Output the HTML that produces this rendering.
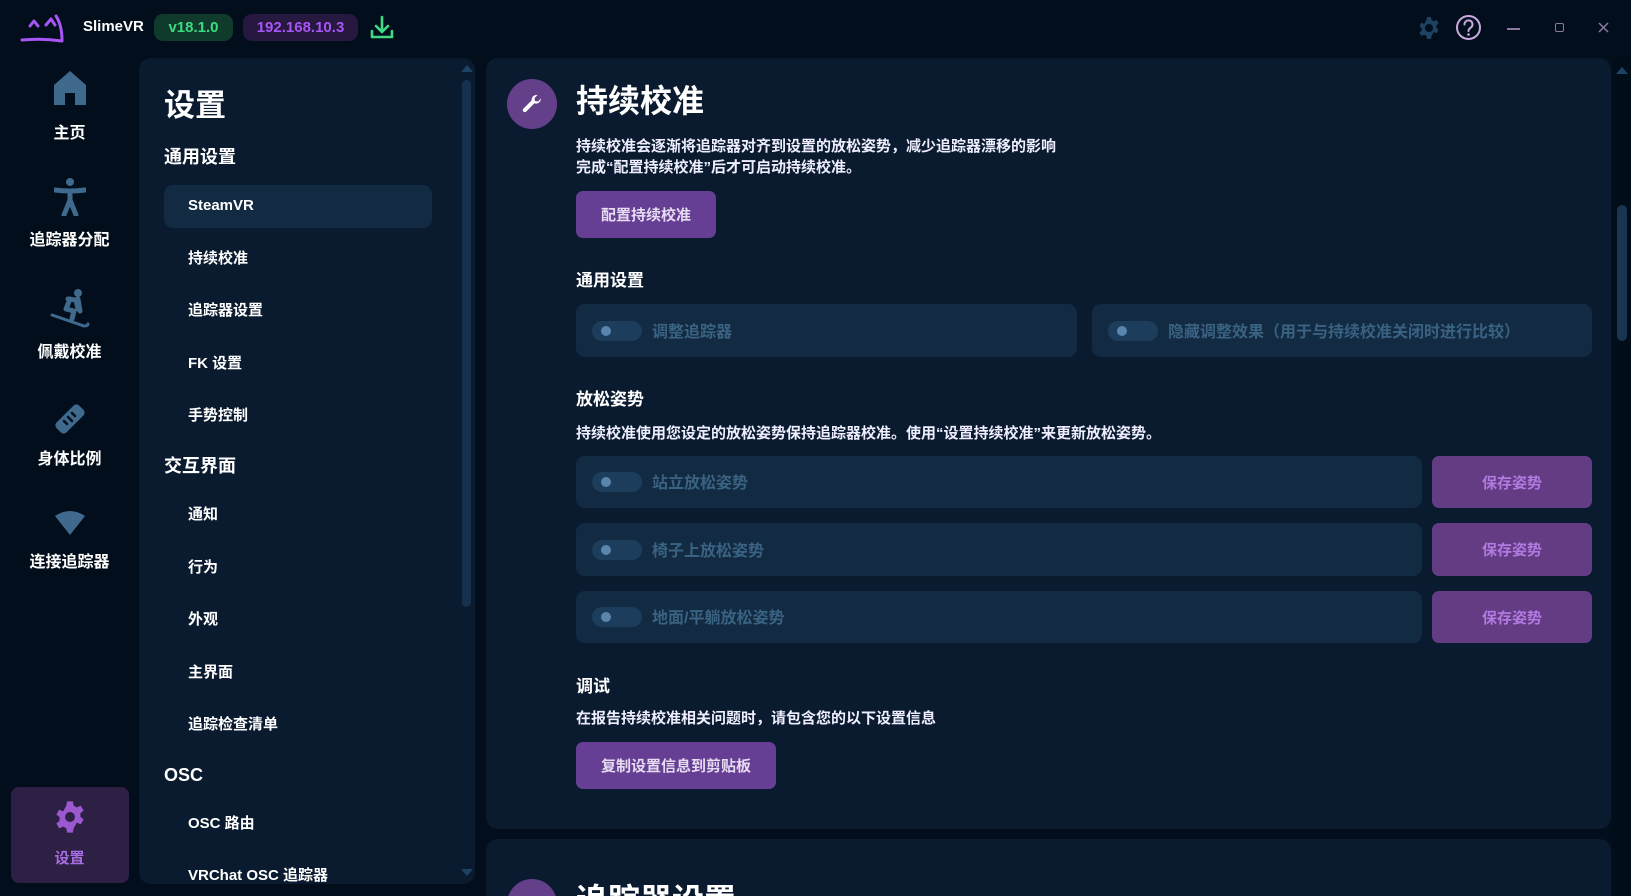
<!DOCTYPE html>
<html><head><meta charset="utf-8"><style>
*{margin:0;padding:0;box-sizing:border-box}
html{width:1631px;height:896px;overflow:hidden}
body{width:1631px;height:896px;background:#020e1b;overflow:hidden;position:relative;font-family:"Liberation Sans","Noto Sans CJK SC",sans-serif;color:#fff;font-weight:bold}
.a{position:absolute}
.t{position:absolute;white-space:nowrap;line-height:1}
.panel{background:#0a1b2f;border-radius:12px}
.nav{position:absolute;left:0;width:139px;text-align:center;font-size:16px}
.item{font-size:15px;left:188px}
.sec{font-size:18px;left:164px}
.card{position:absolute;background:#122b43;border-radius:9px;display:flex;align-items:center;padding-left:16px}
.tog{position:relative;width:50px;height:20px;border-radius:10px;background:#1c3d5c;flex:none;margin-right:10px}
.tog:after{content:"";position:absolute;left:9px;top:5px;width:10px;height:10px;border-radius:50%;background:#5a86ad}
.lbl{font-size:16px;color:#3a6282;white-space:nowrap;line-height:20px;position:relative;top:2px}
.btn{position:absolute;background:#663f94;border-radius:7px;color:#e6dcf2;font-size:15px;display:flex;align-items:center;justify-content:center}
.save{position:absolute;left:1432px;width:160px;background:#643c83;border-radius:7px;color:#b07ae0;font-size:15px;display:flex;align-items:center;justify-content:center}
</style></head><body>
<svg class="a" style="left:18px;top:13px" width="48" height="30" viewBox="0 0 48 30"><path d="M4 27 Q24 25 44 28 Q44 12 38 3 M12 13 L16 8 L20 13 M28 12 L33 6 L37 12" fill="none" stroke="#a855f7" stroke-width="3" stroke-linecap="round" stroke-linejoin="round"/></svg>
<div class="t" style="left:83px;top:19px;font-size:15px">SlimeVR</div>
<div class="a" style="left:154px;top:14px;width:79px;height:27px;border-radius:9px;background:#0f3a2c;color:#3ddc84;font-size:15px;text-align:center;line-height:27px">v18.1.0</div>
<div class="a" style="left:243px;top:14px;width:115px;height:27px;border-radius:9px;background:#26183f;color:#a855f7;font-size:15px;text-align:center;line-height:27px">192.168.10.3</div>
<svg class="a" style="left:369px;top:15px" width="26" height="26" viewBox="0 0 26 26"><path d="M13 2 V17 M7 11 L13 17 L19 11 M3 16 V22 H23 V16" fill="none" stroke="#3ddc84" stroke-width="2.6" stroke-linecap="round" stroke-linejoin="round"/></svg>
<svg class="a" style="left:1417px;top:16px" width="24" height="24" viewBox="0 0 24 24"><path fill="#1e4262" fill-rule="evenodd" d="M10 1h4l.6 3 2.2 1.2 2.8-1.2 2 3.4-2.3 2c.1.8.1 1.6 0 2.4l2.3 2-2 3.4-2.8-1.2L14.6 20 14 23h-4l-.6-3-2.2-1.2-2.8 1.2-2-3.4 2.3-2a9 9 0 010-2.4l-2.3-2 2-3.4 2.8 1.2L9.4 4zM12 8a4 4 0 100 8 4 4 0 000-8z"/></svg>
<svg class="a" style="left:1455px;top:14px" width="27" height="27" viewBox="0 0 27 27"><circle cx="13.5" cy="13.5" r="11.5" fill="none" stroke="#c9a8e0" stroke-width="2"/><path d="M9.5 10.5a4 4 0 117 2.5c-1.5 1.3-3 2-3 4" fill="none" stroke="#c9a8e0" stroke-width="2" stroke-linecap="round"/><circle cx="13.5" cy="20.5" r="1.3" fill="#c9a8e0"/></svg>
<div class="a" style="left:1507px;top:28px;width:13px;height:2px;background:#8a7aa0"></div>
<div class="a" style="left:1555px;top:23px;width:9px;height:9px;border:1.5px solid #8a7aa0;border-radius:2px"></div>
<svg class="a" style="left:1598px;top:22px" width="11" height="11"><path d="M1 1L10 10M10 1L1 10" stroke="#8a7aa0" stroke-width="1.5"/></svg>

<svg class="a" style="left:54px;top:71px" width="32" height="34" viewBox="0 0 32 34"><path d="M16 0 L32 14 V34 H21 V22 H11 V34 H0 V14Z" fill="#3f6a8e"/></svg>
<div class="nav t" style="top:126px">主页</div>
<svg class="a" style="left:54px;top:178px" width="32" height="38" viewBox="0 0 32 38"><circle cx="16" cy="4" r="4" fill="#3f6a8e"/><path d="M1 12 Q16 14 31 12 M16 13 V24 M16 22 L10 37 M16 22 L22 37" fill="none" stroke="#3f6a8e" stroke-width="5" stroke-linecap="round"/></svg>
<div class="nav t" style="top:233px">追踪器分配</div>
<svg class="a" style="left:50px;top:289px" width="40" height="40" viewBox="0 0 40 40"><circle cx="28" cy="4" r="4" fill="#3f6a8e"/><path d="M18 10 L26 11 L28 20 M20 10 L16 20 L24 22 L22 30 M28 10 L30 22" fill="none" stroke="#3f6a8e" stroke-width="5" stroke-linecap="round" stroke-linejoin="round"/><path d="M2 26 L34 37 Q38 37 38 35" fill="none" stroke="#3f6a8e" stroke-width="3" stroke-linecap="round"/></svg>
<div class="nav t" style="top:345px">佩戴校准</div>
<svg class="a" style="left:50px;top:399px" width="40" height="40" viewBox="0 0 40 40"><rect x="4" y="13" width="32" height="14" rx="4" transform="rotate(-45 20 20)" fill="#3f6a8e"/><path d="M14 22 L17 25 M18 18 L22 22 M22 14 L25 17" stroke="#020e1b" stroke-width="2.5" stroke-linecap="round"/></svg>
<div class="nav t" style="top:452px">身体比例</div>
<svg class="a" style="left:55px;top:510px" width="30" height="26" viewBox="0 0 30 26"><path d="M0 6 Q15 -4 30 6 L15 25Z" fill="#3f6a8e"/></svg>
<div class="nav t" style="top:555px">连接追踪器</div>
<div class="a" style="left:11px;top:787px;width:118px;height:96px;border-radius:8px;background:#2e1f45"></div>
<svg class="a" style="left:53px;top:800px" width="34" height="34" viewBox="0 0 24 24"><path fill="#9b59d0" fill-rule="evenodd" d="M10 1h4l.6 3 2.2 1.2 2.8-1.2 2 3.4-2.3 2c.1.8.1 1.6 0 2.4l2.3 2-2 3.4-2.8-1.2L14.6 20 14 23h-4l-.6-3-2.2-1.2-2.8 1.2-2-3.4 2.3-2a9 9 0 010-2.4l-2.3-2 2-3.4 2.8 1.2L9.4 4zM12 8.5a3.5 3.5 0 100 7 3.5 3.5 0 000-7z"/></svg>
<div class="nav t" style="top:851px;color:#a66ee0;font-size:15px">设置</div>

<div class="a panel" style="left:139px;top:58px;width:336px;height:826px"></div>
<div class="a" style="left:462px;top:80px;width:9px;height:527px;border-radius:5px;background:#15314d"></div>
<svg class="a" style="left:461px;top:64px" width="12" height="8"><path d="M0 8L6 1L12 8Z" fill="#1e4262"/></svg>
<svg class="a" style="left:461px;top:869px" width="12" height="8"><path d="M0 0L6 7L12 0Z" fill="#1e4262"/></svg>
<div class="t" style="left:164px;top:90px;font-size:31px">设置</div>
<div class="t sec" style="top:148px">通用设置</div>
<div class="a" style="left:164px;top:185px;width:268px;height:43px;border-radius:9px;background:#122a42"></div>
<div class="t item" style="top:198px">SteamVR</div>
<div class="t item" style="top:251px">持续校准</div>
<div class="t item" style="top:303px">追踪器设置</div>
<div class="t item" style="top:356px">FK 设置</div>
<div class="t item" style="top:408px">手势控制</div>
<div class="t sec" style="top:457px">交互界面</div>
<div class="t item" style="top:507px">通知</div>
<div class="t item" style="top:560px">行为</div>
<div class="t item" style="top:612px">外观</div>
<div class="t item" style="top:665px">主界面</div>
<div class="t item" style="top:717px">追踪检查清单</div>
<div class="t sec" style="top:766px">OSC</div>
<div class="t item" style="top:816px">OSC 路由</div>
<div class="t item" style="top:868px">VRChat OSC 追踪器</div>

<div class="a panel" style="left:486px;top:58px;width:1125px;height:771px"></div>
<div class="a" style="left:507px;top:79px;width:50px;height:50px;border-radius:50%;background:#65408a"></div>
<svg class="a" style="left:520px;top:92px" width="24" height="24" viewBox="0 0 24 24"><path d="M21 6.5a5 5 0 01-6.6 4.8L6 19.7a2 2 0 01-2.8-2.8l8.4-8.4A5 5 0 0117.5 3l-3 3 .5 3 3 .5z" fill="#fff"/></svg>
<div class="t" style="left:576px;top:85px;font-size:32px">持续校准</div>
<div class="t" style="left:576px;top:139px;font-size:15px;color:#eef">持续校准会逐渐将追踪器对齐到设置的放松姿势，减少追踪器漂移的影响</div>
<div class="t" style="left:576px;top:160px;font-size:15px;color:#eef">完成“配置持续校准”后才可启动持续校准。</div>
<div class="btn" style="left:576px;top:191px;width:140px;height:47px">配置持续校准</div>
<div class="t" style="left:576px;top:272px;font-size:17px">通用设置</div>
<div class="card" style="left:576px;top:304px;width:501px;height:53px"><div class="tog"></div><div class="lbl">调整追踪器</div></div>
<div class="card" style="left:1092px;top:304px;width:500px;height:53px"><div class="tog"></div><div class="lbl">隐藏调整效果（用于与持续校准关闭时进行比较）</div></div>
<div class="t" style="left:576px;top:391px;font-size:17px">放松姿势</div>
<div class="t" style="left:576px;top:426px;font-size:15px;color:#eef">持续校准使用您设定的放松姿势保持追踪器校准。使用“设置持续校准”来更新放松姿势。</div>
<div class="card" style="left:576px;top:456px;width:846px;height:52px"><div class="tog"></div><div class="lbl">站立放松姿势</div></div>
<div class="save" style="top:456px;height:52px">保存姿势</div>
<div class="card" style="left:576px;top:523px;width:846px;height:53px"><div class="tog"></div><div class="lbl">椅子上放松姿势</div></div>
<div class="save" style="top:523px;height:53px">保存姿势</div>
<div class="card" style="left:576px;top:591px;width:846px;height:52px"><div class="tog"></div><div class="lbl">地面/平躺放松姿势</div></div>
<div class="save" style="top:591px;height:52px">保存姿势</div>
<div class="t" style="left:576px;top:678px;font-size:17px">调试</div>
<div class="t" style="left:576px;top:711px;font-size:15px;color:#eef">在报告持续校准相关问题时，请包含您的以下设置信息</div>
<div class="btn" style="left:576px;top:742px;width:200px;height:47px">复制设置信息到剪贴板</div>

<div class="a panel" style="left:486px;top:839px;width:1125px;height:57px;border-radius:12px 12px 0 0;overflow:hidden">
<div class="a" style="left:21px;top:40px;width:50px;height:50px;border-radius:50%;background:#65408a"></div>
<div class="t" style="left:90px;top:45px;font-size:32px">追踪器设置</div>
</div>

<div class="a" style="left:1613px;top:58px;width:18px;height:838px;background:#020d1a"></div>
<svg class="a" style="left:1616px;top:66px" width="12" height="8"><path d="M0 8L6 1L12 8Z" fill="#1e4262"/></svg>
<div class="a" style="left:1617px;top:205px;width:10px;height:136px;border-radius:5px;background:#1a3552"></div>
</body></html>
